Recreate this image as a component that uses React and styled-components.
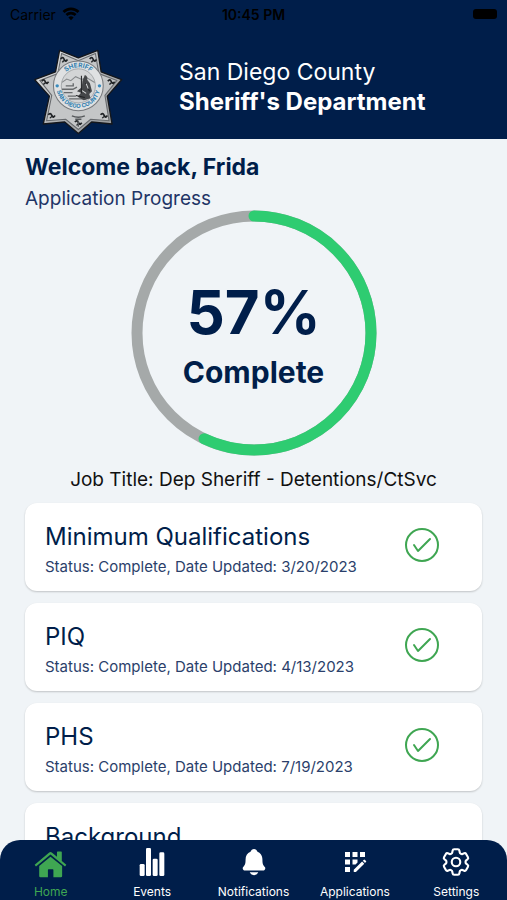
import React, { useState } from "react";
import styled, { createGlobalStyle, css } from "styled-components";
import { IoNotifications } from "react-icons/io5";
import { HiOutlineCog6Tooth } from "react-icons/hi2";
import { MdAppRegistration } from "react-icons/md";

const steps = [
  { title: "Minimum Qualifications", status: "Complete", updated: "3/20/2023" },
  { title: "PIQ", status: "Complete", updated: "4/13/2023" },
  { title: "PHS", status: "Complete", updated: "7/19/2023" },
  { title: "Background", status: "In Progress", updated: "7/19/2023" },
];

const HomeIcon = () => (
  <svg width="33" height="31" viewBox="0 -12 102 96" fill="currentColor">
    <path d="M2 43 L47 5 Q51 2 55 5 L71 18 V4 Q71 2 73 2 H84 Q86 2 86 4 V31 L100 43 L96 48 L51 11 L6 48 Z" />
    <path d="M16 47 L51 18 L87 47 V78 Q87 82 83 82 H60 V59 Q60 57 58 57 H45 Q43 57 43 59 V82 H20 Q16 82 16 78 Z" />
  </svg>
);

const EventsIcon = () => (
  <svg width="26" height="28" viewBox="0 0 78 84" fill="currentColor">
    <rect x="2" y="48" width="15" height="36" rx="4" />
    <rect x="21" y="0" width="15" height="84" rx="4" />
    <rect x="41" y="32" width="15" height="52" rx="4" />
    <rect x="61" y="13" width="15" height="71" rx="4" />
  </svg>
);

const tabs = [
  { name: "Home", icon: <HomeIcon /> },
  { name: "Events", icon: <EventsIcon /> },
  { name: "Notifications", icon: <IoNotifications size={30} /> },
  { name: "Applications", icon: <MdAppRegistration size={30} /> },
  { name: "Settings", icon: <HiOutlineCog6Tooth size={34} /> },
];

const WifiIcon = () => (
  <svg width="18" height="14" viewBox="0 0 18 14" fill="none" stroke="#000">
    <path d="M1.5 5 A10.6 10.6 0 0 1 16.5 5" strokeWidth="2.8" />
    <path d="M4.4 8 A6.5 6.5 0 0 1 13.6 8" strokeWidth="2.6" />
    <path d="M9 13.2 L6.4 10.5 A3.8 3.8 0 0 1 11.6 10.5 Z" fill="#000" stroke="none" />
  </svg>
);

const points = [
  [102, 34],
  [214, 34],
  [284, 120],
  [256, 250],
  [157, 278],
  [54, 250],
  [29, 120],
];

const Badge = () => (
  <svg width="90" height="86" viewBox="24 30 264 252" role="img" aria-label="Sheriff star">
    <defs>
      <linearGradient id="silver" x1="0" y1="0" x2="1" y2="1">
        <stop offset="0" stopColor="#e9eaea" />
        <stop offset="0.5" stopColor="#b4b6b8" />
        <stop offset="1" stopColor="#8d8f91" />
      </linearGradient>
      <path id="sealTop" d="M103 138 A54 54 0 0 1 211 138" />
      <path id="sealBottom" d="M92 138 A65 65 0 0 0 222 138" />
    </defs>
    <path
      d="M102 34 L157 56 L214 34 L224 97 L284 120 L242 168 L256 250 L196 244 L157 278 L117 244 L54 250 L72 168 L29 120 L90 97 Z"
      fill="url(#silver)"
      stroke="#14171c"
      strokeWidth="4"
      strokeLinejoin="round"
    />
    <path
      d="M108 43 L157 64 L207 43 L217 102 L270 122 L235 166 L247 240 L193 236 L157 266 L120 236 L64 240 L79 166 L44 122 L97 102 Z"
      fill="#c4c6c7"
      stroke="#66696c"
      strokeWidth="3"
    />
    {points.map(([x, y]) => {
      const cx = x + (157 - x) * 0.24;
      const cy = y + (146 - y) * 0.24;
      return (
        <g key={`${x}-${y}`} fill="none" stroke="#202326" strokeWidth="5">
          <path d={`M${cx - 10} ${cy - 2} q6 -8 10 1 t10 1`} />
          <path d={`M${cx - 5} ${cy + 8} q5 -9 12 -2`} strokeWidth="4" />
        </g>
      );
    })}
    <circle cx="157" cy="138" r="73" fill="#dfe1e2" stroke="#77797c" strokeWidth="3" />
    <circle cx="157" cy="138" r="50" fill="#d3d5d6" stroke="#8f9497" strokeWidth="2" />
    <path d="M109 128 l14 -10 l12 5 l14 -12 l18 8 l14 -5 l24 14" fill="none" stroke="#86898b" strokeWidth="3" />
    <path d="M109 148 h32 l12 -6 M114 158 h26 M120 138 h22 v-8 M126 168 h24 M130 176 h50" fill="none" stroke="#66696b" strokeWidth="4" />
    <path d="M176 106 q10 4 7 14 l8 10 l6 24 l-8 8 l4 12 l-20 6 l-18 -10 l10 -12 l-12 -4 l14 -12 l2 -18 Z" fill="#454749" />
    <path d="M166 108 v52 M178 130 l12 24 M150 166 l26 6" stroke="#1f2123" strokeWidth="3" />
    <path d="M180 132 l6 14 M168 152 l12 8" stroke="#d8dadb" strokeWidth="3" />
    <circle cx="95" cy="138" r="5" fill="#3a8bbd" />
    <circle cx="219" cy="138" r="5" fill="#3a8bbd" />
    <BadgeText fontSize="19">
      <textPath href="#sealTop" startOffset="50%">SHERIFF</textPath>
    </BadgeText>
    <BadgeText fontSize="17">
      <textPath href="#sealBottom" startOffset="50%">SAN DIEGO COUNTY</textPath>
    </BadgeText>
    <path d="M138 226 q19 8 38 0 M148 236 h18 M157 240 v18" fill="none" stroke="#55585b" strokeWidth="4" />
  </svg>
);

const ProgressRing = ({ percent }) => {
  const radius = 117;
  const length = 2 * Math.PI * radius;

  return (
    <Ring>
      <svg width="246" height="246" viewBox="0 0 246 246" fill="none" strokeWidth="11">
        <circle cx="123" cy="123" r={radius} stroke="#a5a9a9" />
        <circle
          cx="123"
          cy="123"
          r={radius}
          stroke="#2ecc71"
          strokeLinecap="round"
          strokeDasharray={`${(length * percent) / 100} ${length}`}
          transform="rotate(-90 123 123)"
        />
      </svg>
      <RingLabel>
        <Percent>{percent}%</Percent>
        <RingText>Complete</RingText>
      </RingLabel>
    </Ring>
  );
};

const App = () => {
  const [active, setActive] = useState("Home");

  return (
    <>
      <GlobalStyle />
      <Screen>
        <Header>
          <StatusBar>
            <Carrier>
              Carrier <WifiIcon />
            </Carrier>
            <Clock>10:45 PM</Clock>
            <Battery />
          </StatusBar>
          <Brand>
            <Badge />
            <BrandName>
              San Diego County
              <strong>Sheriff's Department</strong>
            </BrandName>
          </Brand>
        </Header>

        <Content>
          <Welcome>Welcome back, Frida</Welcome>
          <Subtitle>Application Progress</Subtitle>
          <ProgressRing percent={57} />
          <JobTitle>Job Title: Dep Sheriff - Detentions/CtSvc</JobTitle>
          <StepList>
            {steps.map((step) => (
              <StepCard key={step.title}>
                <div>
                  <StepTitle>{step.title}</StepTitle>
                  <StepStatus>
                    Status: {step.status}, Date Updated: {step.updated}
                  </StepStatus>
                </div>
                {step.status === "Complete" && (
                  <CheckIcon viewBox="0 0 36 36">
                    <circle cx="18" cy="18" r="16" />
                    <path d="M10 18 L14 24 L26 12" />
                  </CheckIcon>
                )}
              </StepCard>
            ))}
          </StepList>
        </Content>

        <TabBar>
          {tabs.map((tab) => (
            <Tab key={tab.name} $active={active === tab.name} onClick={() => setActive(tab.name)}>
              <TabIcon>{tab.icon}</TabIcon>
              {tab.name}
            </Tab>
          ))}
        </TabBar>
      </Screen>
    </>
  );
};

export default App;

const GlobalStyle = createGlobalStyle`
  * {
    box-sizing: border-box;
  }

  body {
    margin: 0;
    background: #f0f4f7;
    font-family: Inter, "Liberation Sans", sans-serif;
  }

  h1, h2, p, ul {
    margin: 0;
    padding: 0;
  }
`;

const Screen = styled.div`
  display: flex;
  flex-direction: column;
  height: 100vh;
  background: #f0f4f7;
  color: #001e4a;
`;

const Header = styled.header`
  flex: none;
  background: #001e4a;
  color: #fff;
`;

const StatusBar = styled.div`
  display: grid;
  grid-template-columns: 1fr auto 1fr;
  align-items: center;
  height: 28px;
  padding: 0 10px;
  color: #000;
  font-size: 14px;
`;

const Carrier = styled.span`
  display: flex;
  align-items: center;
  gap: 6px;
`;

const Clock = styled.span`
  font-weight: 600;
`;

const Battery = styled.span`
  justify-self: end;
  width: 24px;
  height: 10px;
  border-radius: 3px;
  background: #000;
`;

const Brand = styled.div`
  display: flex;
  align-items: center;
  gap: 56px;
  padding: 21px 33px 4px;
`;

const BrandName = styled.h1`
  padding-bottom: 10px;
  font-size: 23px;
  font-weight: 400;
  line-height: 30px;

  strong {
    display: block;
    font-size: 24px;
    font-weight: 700;
  }
`;

const Content = styled.main`
  flex: 1;
  min-height: 0;
  padding: 12px 25px 0;
  overflow-y: auto;
  scrollbar-width: none;
`;

const Welcome = styled.h2`
  font-size: 23px;
  font-weight: 700;
  line-height: 32px;
`;

const Subtitle = styled.p`
  font-size: 19px;
  line-height: 32px;
  color: #1f3566;
`;

const Ring = styled.div`
  display: grid;
  place-items: center;
  margin-top: -5px;

  > * {
    grid-area: 1 / 1;
  }

  svg {
    display: block;
  }
`;

const RingLabel = styled.div`
  padding-top: 6px;
  font-weight: 700;
  text-align: center;
`;

const Percent = styled.p`
  font-size: 60px;
  line-height: 72px;
`;

const RingText = styled.p`
  font-size: 30px;
  line-height: 48px;
`;

const JobTitle = styled.p`
  padding: 10px 0 9px;
  font-size: 19px;
  line-height: 28px;
  text-align: center;
  color: #111;
`;

const StepList = styled.ul`
  display: flex;
  flex-direction: column;
  gap: 12px;
  padding-bottom: 12px;
`;

const StepCard = styled.li`
  display: flex;
  align-items: flex-start;
  justify-content: space-between;
  min-height: 88px;
  padding: 17px 42px 11px 20px;
  border-radius: 12px;
  background: #fff;
  box-shadow: 0 1px 2px rgba(0, 0, 0, 0.2);
`;

const StepTitle = styled.h2`
  font-size: 24px;
  font-weight: 400;
  line-height: 34px;
`;

const StepStatus = styled.p`
  font-size: 15px;
  line-height: 26px;
  color: #2b3f6b;
`;

const CheckIcon = styled.svg`
  flex: none;
  width: 36px;
  height: 36px;
  margin-top: 7px;
  fill: none;
  stroke: #3fa652;
  stroke-width: 2;
  stroke-linecap: round;
  stroke-linejoin: round;
`;

const TabBar = styled.nav`
  display: flex;
  flex: none;
  height: 60px;
  border-radius: 20px 20px 0 0;
  background: #001e4a;
`;

const Tab = styled.button`
  display: flex;
  flex: 1 1 0;
  flex-direction: column;
  align-items: center;
  min-width: 0;
  padding: 0;
  border: 0;
  background: none;
  color: #fff;
  font-family: inherit;
  font-size: 12px;
  line-height: 16px;
  cursor: pointer;

  ${(props) =>
    props.$active &&
    css`
      color: #3fa652;
    `}
`;

const TabIcon = styled.span`
  display: flex;
  align-items: center;
  justify-content: center;
  height: 44px;

  svg {
    flex: none;
  }
`;

const BadgeText = styled.text`
  fill: #2f7fb0;
  font-weight: 700;
  text-anchor: middle;
`;
